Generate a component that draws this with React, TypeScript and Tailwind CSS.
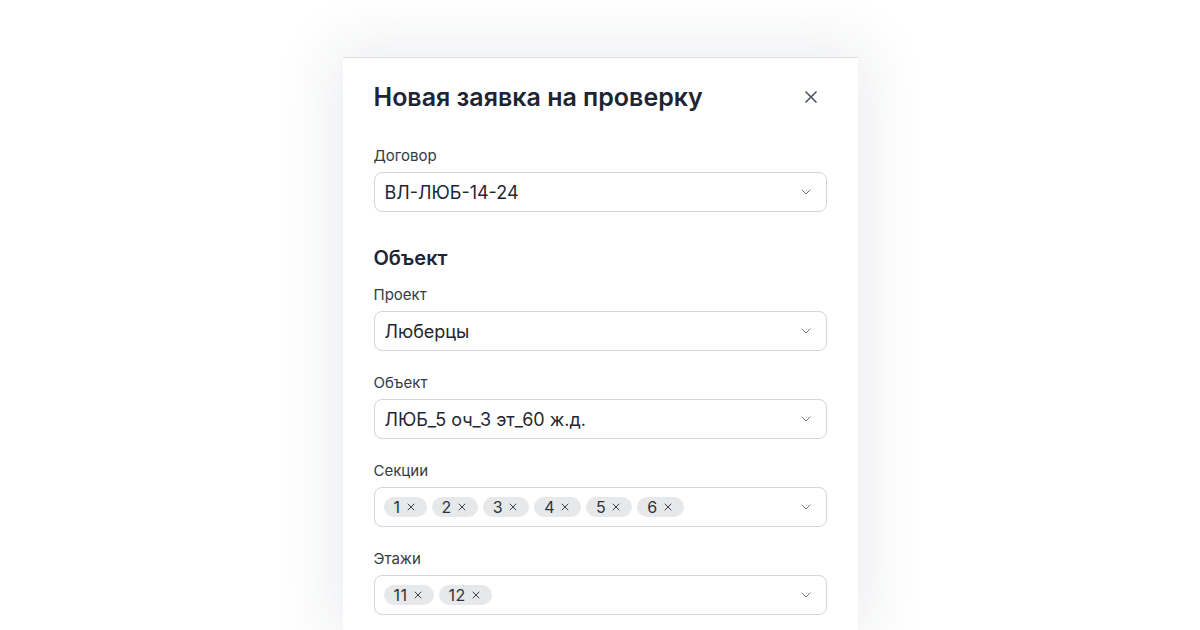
import { X, ChevronDown } from "lucide-react";

const font = { fontFamily: "Inter, 'Noto Sans', sans-serif" };

const Chevron = () => (
  <ChevronDown size={16} strokeWidth={1.5} className="text-[#6b7280] shrink-0" />
);

const Select = ({ value }: { value: string }) => (
  <div className="flex items-center h-[40px] pl-[10px] pr-[12px] border border-[#d4d6da] rounded-[8px] bg-white">
    <span className="flex-1 text-[18px] text-[#1f2733]">{value}</span>
    <Chevron />
  </div>
);

const TagSelect = ({ tags }: { tags: string[] }) => (
  <div className="flex items-center h-[40px] pl-[9px] pr-[12px] border border-[#d4d6da] rounded-[8px] bg-white">
    <div className="flex-1 flex items-center gap-[5px]">
      {tags.map((t) => (
        <span
          key={t}
          className="flex items-center gap-[4px] h-[20px] px-[10px] rounded-full bg-[#e7e8ea] text-[16px] tracking-[0.5px] text-[#2a3140]"
        >
          {t}
          <X size={12} strokeWidth={2} className="text-[#3a4150]" />
        </span>
      ))}
    </div>
    <Chevron />
  </div>
);

const Field = ({ label, children }: { label: string; children: React.ReactNode }) => (
  <div className="flex flex-col gap-[6px]">
    <label className="text-[15px] leading-[20px] text-[#343a46]">{label}</label>
    {children}
  </div>
);

export default function App() {
  return (
    <div className="w-[1200px] h-[630px] bg-white overflow-hidden flex justify-center pt-[57px]" style={font}>
      <div className="w-[515px] bg-white border-t border-[#dcdde2] shadow-[0_0_60px_10px_rgba(30,40,80,0.09)] px-[31px] pt-[23px]">
        <div className="flex items-center justify-between">
          <h1 className="text-[25px] leading-[32px] font-semibold text-[#1d2433]">
            Новая заявка на проверку
          </h1>
          <X size={20} strokeWidth={2} className="text-[#4a5160] mr-[6px]" />
        </div>

        <div className="mt-[33px]">
          <Field label="Договор">
            <Select value="ВЛ-ЛЮБ-14-24" />
          </Field>
        </div>

        <h2 className="mt-[32px] text-[20px] leading-[28px] font-semibold text-[#1d2433]">Объект</h2>

        <div className="mt-[13px] flex flex-col gap-[22px]">
          <Field label="Проект">
            <Select value="Люберцы" />
          </Field>
          <Field label="Объект">
            <Select value="ЛЮБ_5 оч_3 эт_60 ж.д." />
          </Field>
          <Field label="Секции">
            <TagSelect tags={["1", "2", "3", "4", "5", "6"]} />
          </Field>
          <Field label="Этажи">
            <TagSelect tags={["11", "12"]} />
          </Field>
        </div>
      </div>
    </div>
  );
}
